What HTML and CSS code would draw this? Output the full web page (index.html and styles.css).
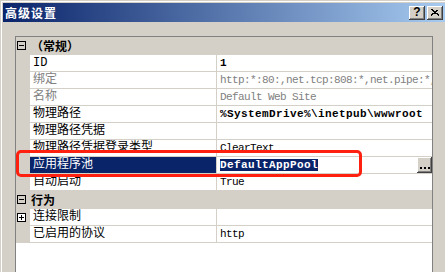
FILE: index.html
```html
<!DOCTYPE html>
<html lang="zh-CN">
<head>
    <meta charset="UTF-8">
    <title>高级设置</title>
    <link rel="stylesheet" href="styles.css">
</head>
<body>
    <div class="window">
        <div class="titlebar">
            <span class="title">高级设置</span>
            <span class="caption-btn help">?</span>
            <span class="caption-btn close">
                <svg width="8" height="7" viewBox="0 0 8 7">
                    <path d="M0.5 0.5 L7.5 6.5 M1.5 0.5 L8 6.5 M7.5 0.5 L0.5 6.5 M6.5 0.5 L0 6.5" stroke="#000" stroke-width="1" shape-rendering="crispEdges"/>
                </svg>
            </span>
        </div>

        <div class="grid">
            <div class="cat">
                <span class="margin"><span class="toggle minus"></span></span>
                <span class="cat-label">（常规）</span>
            </div>
            <div class="row">
                <span class="margin"></span>
                <span class="name">ID</span>
                <span class="value bold">1</span>
            </div>
            <div class="row">
                <span class="margin"></span>
                <span class="name muted">绑定</span>
                <span class="value muted">http:*:80:,net.tcp:808:*,net.pipe:*,</span>
            </div>
            <div class="row">
                <span class="margin"></span>
                <span class="name muted">名称</span>
                <span class="value muted">Default Web Site</span>
            </div>
            <div class="row">
                <span class="margin"></span>
                <span class="name">物理路径</span>
                <span class="value bold">%SystemDrive%\inetpub\wwwroot</span>
            </div>
            <div class="row">
                <span class="margin"></span>
                <span class="name">物理路径凭据</span>
                <span class="value"></span>
            </div>
            <div class="row">
                <span class="margin"></span>
                <span class="name">物理路径凭据登录类型</span>
                <span class="value">ClearText</span>
            </div>
            <div class="row">
                <span class="margin"></span>
                <span class="name selected">应用程序池</span>
                <span class="value">
                    <span class="sel-text bold">DefaultAppPool</span>
                    <span class="dots-btn"><i></i><i></i><i></i></span>
                </span>
            </div>
            <div class="row">
                <span class="margin"></span>
                <span class="name">自动启动</span>
                <span class="value">True</span>
            </div>
            <div class="cat">
                <span class="margin"><span class="toggle minus"></span></span>
                <span class="cat-label">行为</span>
            </div>
            <div class="row">
                <span class="margin"><span class="toggle plus"></span></span>
                <span class="name">连接限制</span>
                <span class="value"></span>
            </div>
            <div class="row">
                <span class="margin"></span>
                <span class="name">已启用的协议</span>
                <span class="value">http</span>
            </div>
        </div>

        <!-- 红色标注框 -->
        <div class="mark"></div>
    </div>
</body>
</html>
```

FILE: styles.css
```css
/* Ventana */
body {
    margin: 0;
    background-color: #d4d0c8;
}

.window {
    position: relative;
    width: 445px;
    height: 272px;
    padding: 3px 0 0 3px;
    box-sizing: border-box;
    background-color: #d4d0c8;
    box-shadow: inset 1px 1px #d4d0c8, inset 2px 2px #fff;
    overflow: hidden;
    font-family: "Liberation Mono", "Noto Sans CJK SC", monospace;
    font-size: 12px;
}

.titlebar {
    display: flex;
    align-items: center;
    height: 19px;
    background: linear-gradient(to right, #0a246a, #a6caf0);
}

.title {
    padding-left: 2px;
    color: #fff;
    font-family: "Noto Sans CJK SC", sans-serif;
    font-weight: bold;
    font-size: 12px;
    letter-spacing: 1px;
    line-height: 19px;
}

.caption-btn {
    display: flex;
    align-items: center;
    justify-content: center;
    width: 16px;
    height: 14px;
    box-sizing: border-box;
    background-color: #d4d0c8;
    box-shadow: inset -1px -1px #404040, inset 1px 1px #fff, inset -2px -2px #808080;
}

.help {
    margin-left: auto;
    padding-bottom: 1px;
    font-family: "Liberation Sans", sans-serif;
    font-weight: bold;
    font-size: 12px;
    color: #000;
}

.close {
    margin-left: 2px;
    margin-right: 2px;
    padding-bottom: 1px;
}

/* Cuadrícula de propiedades */
.grid {
    width: 418px;
    height: 260px;
    margin: 14px 0 0 12px;
    box-sizing: border-box;
    border: 1px solid #808080;
    background-color: #fff;
}

.row,
.cat {
    display: flex;
    height: 16px;
    border-bottom: 1px solid #d4d0c8;
    line-height: 16px;
}

.cat {
    height: 17px;
    line-height: 17px;
    background-color: #d4d0c8;
}

.margin {
    display: flex;
    align-items: center;
    width: 14px;
    flex: none;
    background-color: #d4d0c8;
}

.toggle {
    position: relative;
    width: 9px;
    height: 9px;
    margin-left: 1px;
    box-sizing: border-box;
    border: 1px solid #000;
    background-color: #fff;
}

.cat .toggle {
    background-color: transparent;
}

.toggle::before {
    content: "";
    position: absolute;
    left: 1px;
    top: 3px;
    width: 5px;
    height: 1px;
    background-color: #000;
}

.toggle.plus::after {
    content: "";
    position: absolute;
    left: 3px;
    top: 1px;
    width: 1px;
    height: 5px;
    background-color: #000;
}

.cat-label {
    padding-left: 1px;
    font-family: "Noto Sans CJK SC", sans-serif;
    font-weight: bold;
    color: #000;
}

.name {
    width: 186px;
    flex: none;
    padding-left: 3px;
    box-sizing: border-box;
    white-space: nowrap;
    overflow: hidden;
    color: #000;
}

.name.selected {
    background-color: #0a246a;
    color: #fff;
}

.value {
    display: flex;
    align-items: center;
    flex: 1;
    min-width: 0;
    padding-left: 3px;
    border-left: 1px solid #d4d0c8;
    white-space: nowrap;
    overflow: hidden;
    font-size: 11px;
    letter-spacing: -0.6px;
    color: #000;
}

.value.bold,
.sel-text {
    font-weight: bold;
    letter-spacing: 0.4px;
}

.muted {
    color: #808080;
}

.sel-text {
    line-height: 12px;
    background-color: #0a246a;
    color: #fff;
}

.dots-btn {
    display: flex;
    align-items: flex-end;
    justify-content: center;
    gap: 2px;
    width: 15px;
    height: 16px;
    margin-left: auto;
    padding-bottom: 4px;
    box-sizing: border-box;
    background-color: #d4d0c8;
    box-shadow: inset -1px -1px #404040, inset 1px 1px #fff, inset -2px -2px #808080;
}

.dots-btn i {
    width: 2px;
    height: 2px;
    background-color: #000;
}

/* Marca roja */
.mark {
    position: absolute;
    left: 16px;
    top: 150px;
    width: 346px;
    height: 27px;
    box-sizing: border-box;
    border: 3px solid #ff2010;
    border-radius: 5px;
}
```
